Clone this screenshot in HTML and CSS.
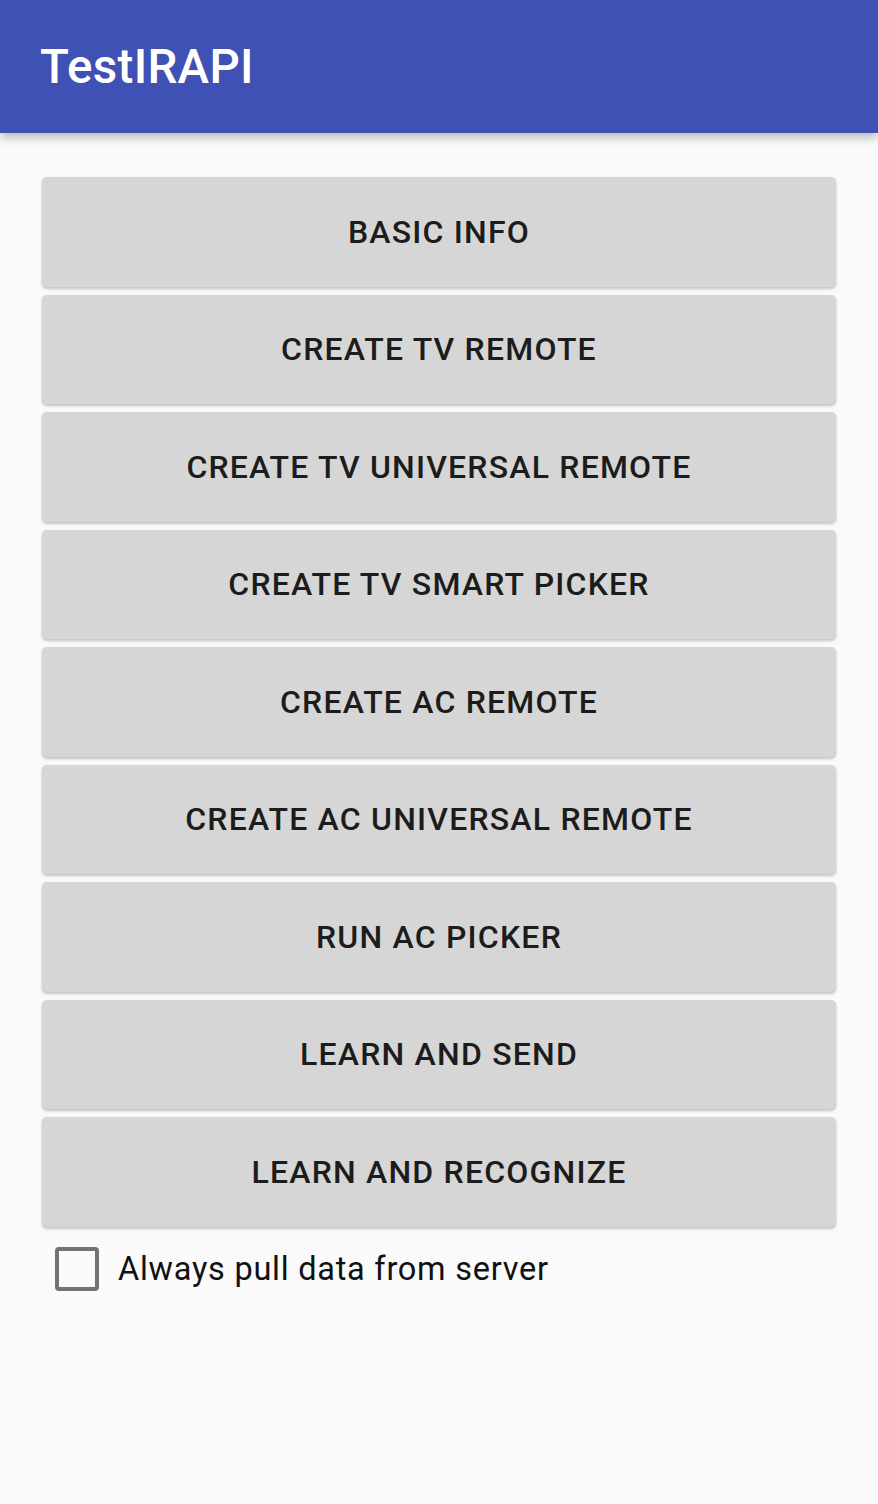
FILE: index.html
```html
<!DOCTYPE html>
<html>
<head>
<meta charset="utf-8">
<link rel="stylesheet" href="styles.css">
</head>
<body>
<header class="appbar"><h1 class="title">TestIRAPI</h1></header>
<main class="content">
  <button class="btn">BASIC INFO</button>
  <button class="btn">CREATE TV REMOTE</button>
  <button class="btn">CREATE TV UNIVERSAL REMOTE</button>
  <button class="btn">CREATE TV SMART PICKER</button>
  <button class="btn">CREATE AC REMOTE</button>
  <button class="btn">CREATE AC UNIVERSAL REMOTE</button>
  <button class="btn">RUN AC PICKER</button>
  <button class="btn">LEARN AND SEND</button>
  <button class="btn">LEARN AND RECOGNIZE</button>
  <label class="check"><span class="box"></span><span class="check-label">Always pull data from server</span></label>
</main>
</body>
</html>
```
FILE: styles.css
```css
html, body { margin: 0; padding: 0; }
body {
  background: #fafafa;
  font-family: Roboto, "Noto Sans", sans-serif;
  width: 878px;
  height: 1504px;
  overflow: hidden;
}
.appbar {
  position: relative;
  z-index: 2;
  height: 133px;
  background: #3f51b5;
  box-shadow: 0 4px 10px rgba(0,0,0,0.28);
  display: flex;
  align-items: center;
  padding-left: 40px;
}
.title {
  margin: 0;
  color: #fff;
  font-weight: 500;
  font-size: 47.5px;
  letter-spacing: 0.3px;
}
.content {
  padding: 44px 42px 0;
  display: flex;
  flex-direction: column;
  gap: 8px;
}
.btn {
  height: 109.5px;
  border: none;
  border-radius: 5px;
  background: #d6d6d6;
  box-shadow: 0 2px 3px rgba(0,0,0,0.22), 0 0 1px rgba(0,0,0,0.12);
  font-family: Roboto, "Noto Sans", sans-serif;
  font-weight: 500;
  font-size: 32px;
  letter-spacing: 1.2px;
  color: #1c1c1c;
  padding: 0;
}
.check {
  display: flex;
  align-items: center;
  margin-top: 4px;
  padding-left: 13px;
  height: 60px;
}
.box {
  width: 36px;
  height: 36px;
  border: 4px solid #737373;
  border-radius: 4px;
  box-sizing: content-box;
}
.check-label {
  margin-left: 19px;
  font-size: 32.5px;
  color: #111;
  letter-spacing: 0.75px;
}
```
